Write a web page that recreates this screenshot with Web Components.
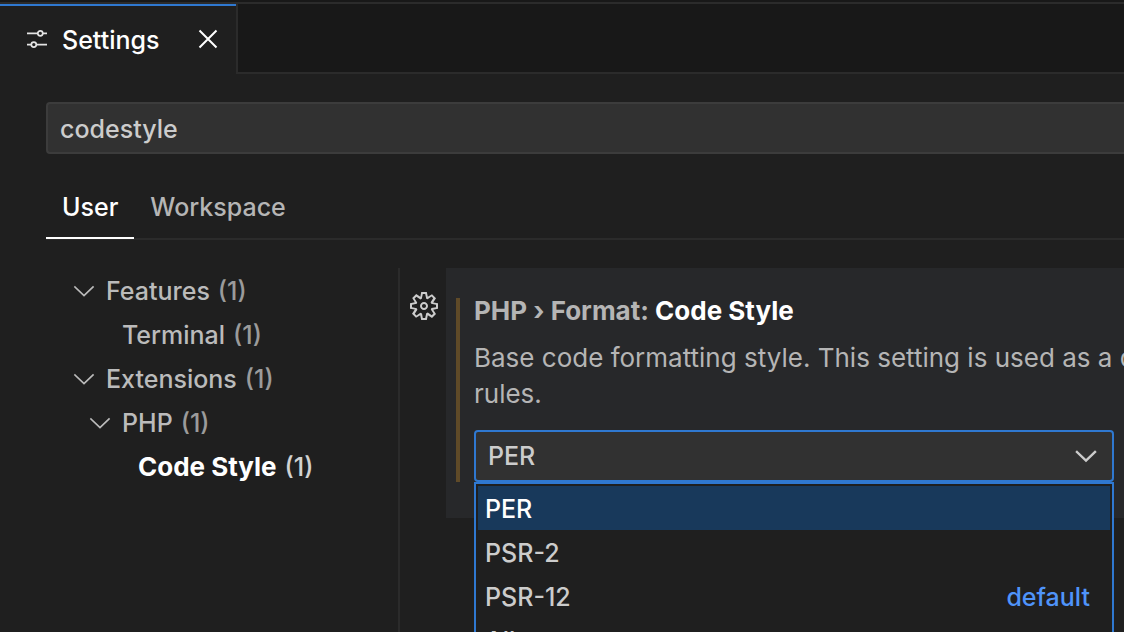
<!DOCTYPE html>
<html lang="en">
<head>
<meta charset="utf-8">
<title>Settings</title>
<style>
  html, body { height: 100%; margin: 0; }
  body {
    --line: #2b2b2b;
    --bg: #1f1f1f;
    --accent: #2f78d0;
    --text: #cccccc;
    --muted: #b5b5b5;
    background: var(--bg);
    color: var(--text);
    font: 500 25px/36px Inter, "Liberation Sans", sans-serif;
    overflow: hidden;
  }
</style>
</head>
<body>
<settings-editor></settings-editor>

<script>
const CHEVRON = '<svg viewBox="0 0 32 32" aria-hidden="true"><path d="M7 12 16 20.6 25 12" fill="none" stroke="currentColor" stroke-linecap="square"/></svg>';

function define(name, html, setup) {
  const template = document.createElement('template');
  template.innerHTML = html;
  customElements.define(name, class extends HTMLElement {
    constructor() {
      super();
      this.attachShadow({ mode: 'open' }).append(template.content.cloneNode(true));
    }
    connectedCallback() { if (setup) setup(this, this.shadowRoot); }
  });
}

define('editor-tabs', `
  <style>
    :host { display: flex; box-sizing: border-box; height: 74px; background: #181818; padding-top: 2px; }
    .tab { display: flex; align-items: center; box-sizing: border-box; width: 238px; padding: 0 12px 0 20px;
      border-top: 2px solid var(--line); border-right: 2px solid var(--line); background: var(--bg); color: #fff; position: relative; }
    .tab::before { content: ""; position: absolute; left: 0; right: 0; top: 0; height: 2px; background: var(--accent); }
    .rest { flex: 1; border: solid var(--line); border-width: 2px 0; }
    svg { display: block; width: 32px; height: 32px; flex: none; }
    .name { flex: 1; padding: 2px 0 0 10px; white-space: nowrap; }
    button { all: unset; display: block; }
  </style>
  <div class="tab" role="tab" aria-selected="true">
    <svg viewBox="0 0 32 32" fill="none" stroke="#e4e4e4" stroke-width="1.7" aria-hidden="true">
      <path d="M7 10.3h10.8M23 10.3h4M7 21.6h4.2M16.5 21.6H27"/>
      <circle cx="20.3" cy="10.3" r="2.5"/><circle cx="13.8" cy="21.6" r="2.5"/>
    </svg>
    <span class="name"><slot></slot></span>
    <button aria-label="Close"><svg viewBox="0 0 32 32" fill="none" stroke="#fff" stroke-width="2" aria-hidden="true"><path d="M7.5 7.5l17 17M24.5 7.5l-17 17"/></svg></button>
  </div>
  <div class="rest"></div>`);

define('search-box', `
  <style>
    :host { display: block; }
    input { display: block; box-sizing: border-box; width: 100%; height: 52px; margin: 0; padding: 2px 12px 0;
      border: 2px solid #3c3c3c; border-right: 0; border-radius: 4px 0 0 4px; background: #313131; color: var(--text); font: inherit; outline: 0; }
  </style>
  <input type="text" aria-label="Search settings" value="codestyle">`);

define('scope-tabs', `
  <style>
    :host { display: flex; box-sizing: border-box; height: 62px; border-bottom: 2px solid var(--line); }
    button { all: unset; box-sizing: border-box; height: 61px; padding: 0 16px 2px; color: var(--muted); border-bottom: 2px solid transparent; }
    button[aria-selected=true] { color: #fff; border-color: #fff; }
  </style>
  <button role="tab" aria-selected="true">User</button><button role="tab" aria-selected="false">Workspace</button>`);

define('tree-row', `
  <style>
    :host { display: flex; align-items: center; height: 44px; white-space: nowrap; color: #bbb; }
    :host([level="2"]) { padding-left: 16px; }
    :host([level="3"]) { padding-left: 32px; }
    :host([selected]) { color: #fff; }
    :host([selected]) .label { font-size: 26px; font-weight: 700; }
    .twist { width: 32px; height: 32px; margin-right: 6px; stroke-width: 1.7; }
    svg { display: block; }
    .count { opacity: .8; padding-left: 8px; }
  </style>
  <span class="twist"></span><span class="label"><slot></slot></span><span class="count">(1)</span>`,
  (host, root) => { if (host.hasAttribute('open')) root.querySelector('.twist').innerHTML = CHEVRON; });

define('option-list', `
  <style>
    :host { display: block; box-sizing: border-box; padding: 2px; border: 2px solid var(--accent); background: var(--bg); }
  </style>
  <slot></slot>`);

define('option-row', `
  <style>
    :host { display: flex; align-items: center; justify-content: space-between; box-sizing: border-box; height: 44px; padding: 2px 20px 0 7px; }
    :host([aria-selected=true]) { background: #18395b; color: #fff; }
    .detail { color: #4f94fa; }
  </style>
  <span><slot></slot></span><span class="detail"><slot name="detail"></slot></span>`);

define('select-field', `
  <style>
    :host { display: block; position: relative; width: 640px; }
    select { appearance: none; display: block; box-sizing: border-box; width: 100%; height: 52px; margin: 0; padding: 0 48px 0 12px;
      border: 2px solid var(--accent); border-radius: 4px; background: #313131; color: var(--text); font: inherit; outline: 0; }
    .arrow { position: absolute; right: 12px; top: 10px; width: 32px; height: 32px; stroke-width: 2.4; pointer-events: none; }
    svg { display: block; }
    ::slotted(option-list) { position: absolute; top: 100%; left: 0; right: 0; z-index: 1; }
  </style>
  <select aria-label="Code Style"><option>PER</option><option>PSR-2</option><option>PSR-12</option><option>Allman</option></select>
  <span class="arrow">${CHEVRON}</span>
  <slot></slot>`);

define('setting-item', `
  <style>
    :host { display: flex; align-items: flex-start; min-width: 0; }
    button { all: unset; width: 32px; height: 32px; margin: 22px 6px 0 8px; flex: none; color: #ccc; }
    svg { display: block; }
    .card { flex: 1; min-width: 0; box-sizing: border-box; background: #27282a; padding: 30px 0 36px 10px; }
    .body { border-left: 4px solid #5f4a28; padding-left: 14px; }
    h2 { margin: 0; padding: 0 0 5px; font-size: 26px; line-height: 26px; font-weight: 700; color: var(--muted); }
    h2 b { font-weight: 700; color: #fff; }
    p { margin: 0 0 18px; padding-top: 11px; color: var(--muted); font-size: 26px; font-weight: 400; white-space: nowrap; }
  </style>
  <button aria-label="More actions">
    <svg viewBox="0 0 16 16" fill="currentColor" aria-hidden="true"><path fill-rule="evenodd" d="M9.1 4.4L8.6 2H7.4l-.5 2.4-.7.3-2-1.3-.9.8 1.3 2-.2.7-2.4.5v1.2l2.4.5.3.8-1.3 2 .8.8 2-1.3.8.3.4 2.3h1.2l.5-2.4.8-.3 2 1.3.8-.8-1.3-2 .3-.8 2.3-.4V7.4l-2.4-.5-.3-.8 1.3-2-.8-.8-2 1.3-.7-.2zM9.4 1l.5 2.4L12 2.1l2 2-1.4 2.1 2.4.4v2.8l-2.4.5L14 12l-2 2-2.1-1.4-.5 2.4H6.6l-.5-2.4L4 13.9l-2-2 1.4-2.1L1 9.4V6.6l2.4-.5L2.1 4l2-2 2.1 1.4.4-2.4h2.8zm.6 7c0 1.1-.9 2-2 2s-2-.9-2-2 .9-2 2-2 2 .9 2 2zM8 9c.6 0 1-.4 1-1s-.4-1-1-1-1 .4-1 1 .4 1 1 1z"/></svg>
  </button>
  <div class="card"><div class="body">
    <h2><slot name="category"></slot> <b><slot name="name"></slot></b></h2>
    <p><slot name="description"></slot></p>
    <slot></slot>
  </div></div>`);

define('settings-editor', `
  <style>
    :host { display: block; height: 100%; overflow: hidden; }
    main { padding: 28px 0 0 46px; }
    scope-tabs { margin-top: 24px; }
    .columns { display: grid; grid-template-columns: 352px minmax(0, 1fr); margin-top: 28px; }
    nav { box-sizing: border-box; padding-left: 22px; padding-top: 1px; }
    setting-item { border-left: 2px solid var(--line); min-height: 400px; }
  </style>
  <editor-tabs>Settings</editor-tabs>
  <main>
    <search-box></search-box>
    <scope-tabs role="tablist"></scope-tabs>
    <div class="columns">
      <nav aria-label="Settings groups">
        <tree-row open>Features</tree-row>
        <tree-row level="2">Terminal</tree-row>
        <tree-row open>Extensions</tree-row>
        <tree-row level="2" open>PHP</tree-row>
        <tree-row level="3" selected>Code Style</tree-row>
      </nav>
      <setting-item>
        <span slot="category">PHP › Format:</span>
        <span slot="name">Code Style</span>
        <span slot="description">Base code formatting style. This setting is used as a default<br>rules.</span>
        <select-field>
          <option-list role="listbox">
            <option-row role="option" aria-selected="true">PER</option-row>
            <option-row role="option">PSR-2</option-row>
            <option-row role="option">PSR-12<span slot="detail">default</span></option-row>
            <option-row role="option">Allman</option-row>
          </option-list>
        </select-field>
      </setting-item>
    </div>
  </main>`);
</script>
</body>
</html>
